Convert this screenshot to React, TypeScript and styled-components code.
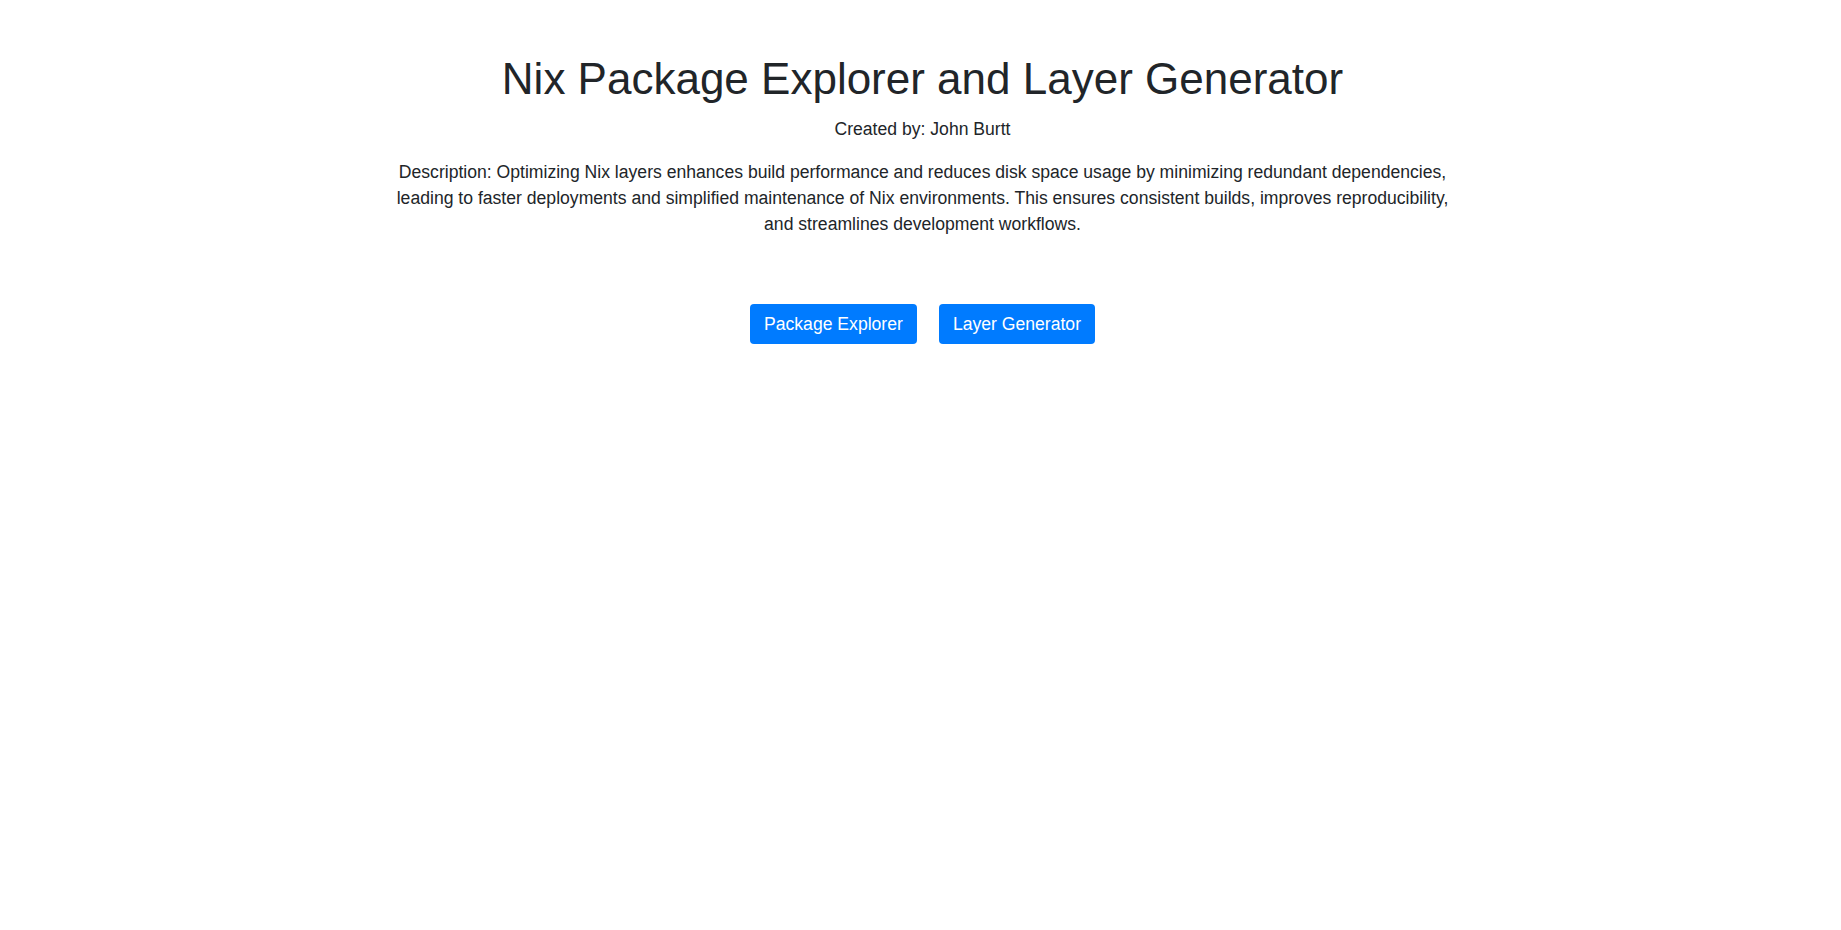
import React from "react";
import styled, { createGlobalStyle } from "styled-components";

const Global = createGlobalStyle`
  html, body { margin: 0; padding: 0; background: #fff; }
  body { font-family: "Liberation Sans", Arial, sans-serif; color: #212529; }
`;

const Page = styled.main`
  max-width: 1110px;
  margin: 0 auto;
  padding: 53px 13px 0 17px;
  text-align: center;
`;

const Title = styled.h1`
  font-size: 44px;
  font-weight: 400;
  line-height: 1.2;
  margin: 0 0 10px;
`;

const Author = styled.p`
  font-size: 17.6px;
  line-height: 1.5;
  margin: 0 0 17px;
`;

const Description = styled.p`
  font-size: 17.6px;
  line-height: 26px;
  margin: 0 auto;
  max-width: 1070px;
`;

const Actions = styled.div`
  display: flex;
  justify-content: center;
  gap: 22px;
  margin-top: 67px;
`;

const Button = styled.button`
  font-family: "Liberation Sans", Arial, sans-serif;
  font-size: 17.6px;
  line-height: 24px;
  padding: 8px 14px;
  color: #fff;
  background: #007bff;
  border: none;
  border-radius: 4px;
  cursor: pointer;
`;

export default function App() {
  return (
    <>
      <Global />
      <Page>
        <Title>Nix Package Explorer and Layer Generator</Title>
        <Author>Created by: John Burtt</Author>
        <Description>
          Description: Optimizing Nix layers enhances build performance and reduces disk space usage by
          minimizing redundant dependencies, leading to faster deployments and simplified maintenance of Nix
          environments. This ensures consistent builds, improves reproducibility, and streamlines development
          workflows.
        </Description>
        <Actions>
          <Button>Package Explorer</Button>
          <Button>Layer Generator</Button>
        </Actions>
      </Page>
    </>
  );
}
